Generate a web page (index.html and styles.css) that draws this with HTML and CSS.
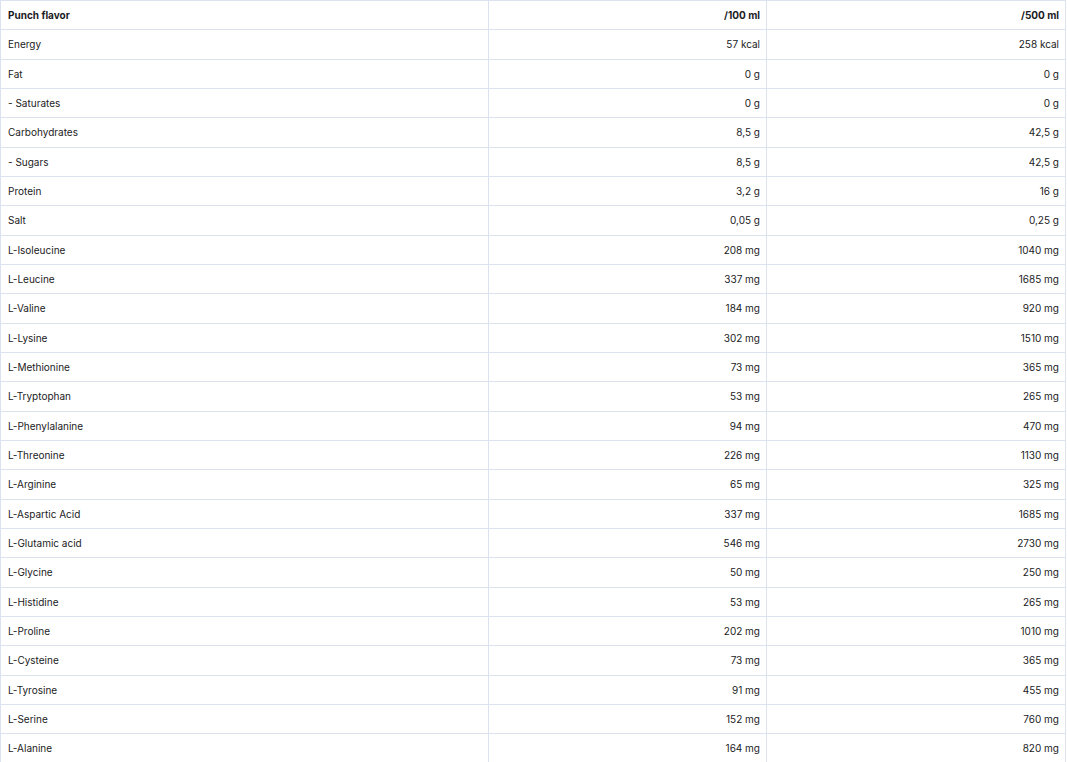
FILE: index.html
```html
<!DOCTYPE html>
<html lang="en">
<head>
    <meta charset="UTF-8">
    <meta name="viewport" content="width=device-width, initial-scale=1.0">
    <title>Nutrition facts</title>
    <link rel="stylesheet" href="styles.css">
</head>
<body>
    <table class="nutrition">
        <colgroup>
            <col class="col-name">
            <col class="col-small">
            <col class="col-large">
        </colgroup>
        <thead>
            <tr>
                <th>Punch flavor</th>
                <th class="num">/100 ml</th>
                <th class="num">/500 ml</th>
            </tr>
        </thead>
        <tbody>
            <tr><td>Energy</td><td class="num">57 kcal</td><td class="num">258 kcal</td></tr>
            <tr><td>Fat</td><td class="num">0 g</td><td class="num">0 g</td></tr>
            <tr><td>- Saturates</td><td class="num">0 g</td><td class="num">0 g</td></tr>
            <tr><td>Carbohydrates</td><td class="num">8,5 g</td><td class="num">42,5 g</td></tr>
            <tr><td>- Sugars</td><td class="num">8,5 g</td><td class="num">42,5 g</td></tr>
            <tr><td>Protein</td><td class="num">3,2 g</td><td class="num">16 g</td></tr>
            <tr><td>Salt</td><td class="num">0,05 g</td><td class="num">0,25 g</td></tr>
            <tr><td>L-Isoleucine</td><td class="num">208 mg</td><td class="num">1040 mg</td></tr>
            <tr><td>L-Leucine</td><td class="num">337 mg</td><td class="num">1685 mg</td></tr>
            <tr><td>L-Valine</td><td class="num">184 mg</td><td class="num">920 mg</td></tr>
            <tr><td>L-Lysine</td><td class="num">302 mg</td><td class="num">1510 mg</td></tr>
            <tr><td>L-Methionine</td><td class="num">73 mg</td><td class="num">365 mg</td></tr>
            <tr><td>L-Tryptophan</td><td class="num">53 mg</td><td class="num">265 mg</td></tr>
            <tr><td>L-Phenylalanine</td><td class="num">94 mg</td><td class="num">470 mg</td></tr>
            <tr><td>L-Threonine</td><td class="num">226 mg</td><td class="num">1130 mg</td></tr>
            <tr><td>L-Arginine</td><td class="num">65 mg</td><td class="num">325 mg</td></tr>
            <tr><td>L-Aspartic Acid</td><td class="num">337 mg</td><td class="num">1685 mg</td></tr>
            <tr><td>L-Glutamic acid</td><td class="num">546 mg</td><td class="num">2730 mg</td></tr>
            <tr><td>L-Glycine</td><td class="num">50 mg</td><td class="num">250 mg</td></tr>
            <tr><td>L-Histidine</td><td class="num">53 mg</td><td class="num">265 mg</td></tr>
            <tr><td>L-Proline</td><td class="num">202 mg</td><td class="num">1010 mg</td></tr>
            <tr><td>L-Cysteine</td><td class="num">73 mg</td><td class="num">365 mg</td></tr>
            <tr><td>L-Tyrosine</td><td class="num">91 mg</td><td class="num">455 mg</td></tr>
            <tr><td>L-Serine</td><td class="num">152 mg</td><td class="num">760 mg</td></tr>
            <tr><td>L-Alanine</td><td class="num">164 mg</td><td class="num">820 mg</td></tr>
        </tbody>
    </table>
</body>
</html>
```

FILE: styles.css
```css
body {
    margin: 0;
    padding: 0;
    font-family: Inter, "Noto Sans", sans-serif;
    color: #1b1b24;
    background: #fff;
}

.nutrition {
    width: 1066px;
    border-collapse: collapse;
    table-layout: fixed;
    font-size: 10px;
}

.col-name {
    width: 488px;
}

.col-small {
    width: 278px;
}

.nutrition th,
.nutrition td {
    border: 1px solid #dbe3ee;
    padding: 7px 6px 7px 7px;
    line-height: 14.33px;
    text-align: left;
    white-space: nowrap;
}

.nutrition th {
    font-weight: 700;
}

.nutrition .num {
    text-align: right;
}
```
